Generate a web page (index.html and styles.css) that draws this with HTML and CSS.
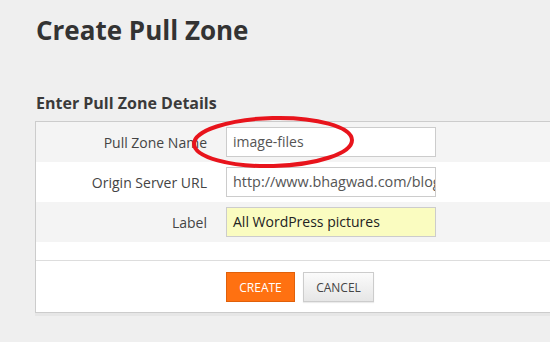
FILE: index.html
```html
<!DOCTYPE html>
<html>
<head>
<meta charset="utf-8">
<link rel="stylesheet" href="styles.css">
</head>
<body>
<div class="page">
  <h1 class="title">Create Pull Zone</h1>
  <h2 class="subtitle">Enter Pull Zone Details</h2>
  <div class="panel">
    <div class="row shaded">
      <label class="label">Pull Zone Name</label>
      <div class="input">image-files</div>
    </div>
    <div class="row">
      <label class="label">Origin Server URL</label>
      <div class="input clip">http://www.bhagwad.com/blog/</div>
    </div>
    <div class="row shaded">
      <label class="label">Label</label>
      <div class="input yellow">All WordPress pictures</div>
    </div>
    <div class="spacer"></div>
    <div class="footer">
      <button class="btn create">CREATE</button>
      <button class="btn cancel">CANCEL</button>
    </div>
  </div>
  <svg class="annotation" width="168" height="56" viewBox="0 0 168 56">
    <ellipse cx="83" cy="27" rx="79" ry="24" fill="none" stroke="#e8141c" stroke-width="4" transform="rotate(-1.5 83 27)"/>
  </svg>
</div>
</body>
</html>
```

FILE: styles.css
```css
* { box-sizing: border-box; }
html, body {
  margin: 0;
  padding: 0;
  background: #efefef;
  font-family: "Open Sans", "Noto Sans", sans-serif;
}
.page {
  position: relative;
  width: 550px;
  height: 342px;
  overflow: hidden;
  padding-top: 12px;
}
.title {
  margin: 0 0 0 36px;
  font-size: 26px;
  font-weight: 700;
  color: #333;
  line-height: 36px;
}
.subtitle {
  margin: 45px 0 0 36px;
  font-size: 16px;
  font-weight: 700;
  color: #3a3a3a;
  line-height: 20px;
}
.panel {
  margin: 8px 0 0 35px;
  background: #fff;
  border-top: 1px solid #cccccc;
  border-left: 1px solid #cccccc;
  border-bottom: 1px solid #cccccc;
  box-shadow: 0 3px 0 #e6e6e6;
}
.row {
  display: flex;
  align-items: center;
  height: 40px;
  background: #fff;
}
.row.shaded { background: #f4f4f4; }
.label {
  width: 171px;
  text-align: right;
  font-size: 14px;
  color: #444;
}
.input {
  margin-left: 19px;
  width: 210px;
  height: 30px;
  border: 1px solid #cccccc;
  background: #fff;
  padding: 0 6px;
  font-size: 14px;
  line-height: 28px;
  color: #555;
  white-space: nowrap;
  overflow: hidden;
}
.input.clip { padding-right: 7px; font-size: 14.4px; }
.input.yellow {
  background: #fafcc0;
  color: #222;
}
.spacer {
  height: 19px;
  border-bottom: 1px solid #dddddd;
}
.footer {
  display: flex;
  gap: 8px;
  padding: 11px 0 10px 190px;
}
.btn {
  height: 30px;
  font-family: "Open Sans", "Noto Sans", sans-serif;
  font-size: 12px;
  padding: 0;
  cursor: pointer;
}
.create {
  width: 69px;
  background: #ff7111;
  border: 1px solid #e0600a;
  color: #fff;
}
.cancel {
  width: 71px;
  background: linear-gradient(#fbfbfb, #e6e6e6);
  border: 1px solid #cccccc;
  color: #444;
  box-shadow: 0 1px 1px rgba(0,0,0,0.08);
}
.annotation {
  position: absolute;
  left: 190px;
  top: 115px;
}
```
